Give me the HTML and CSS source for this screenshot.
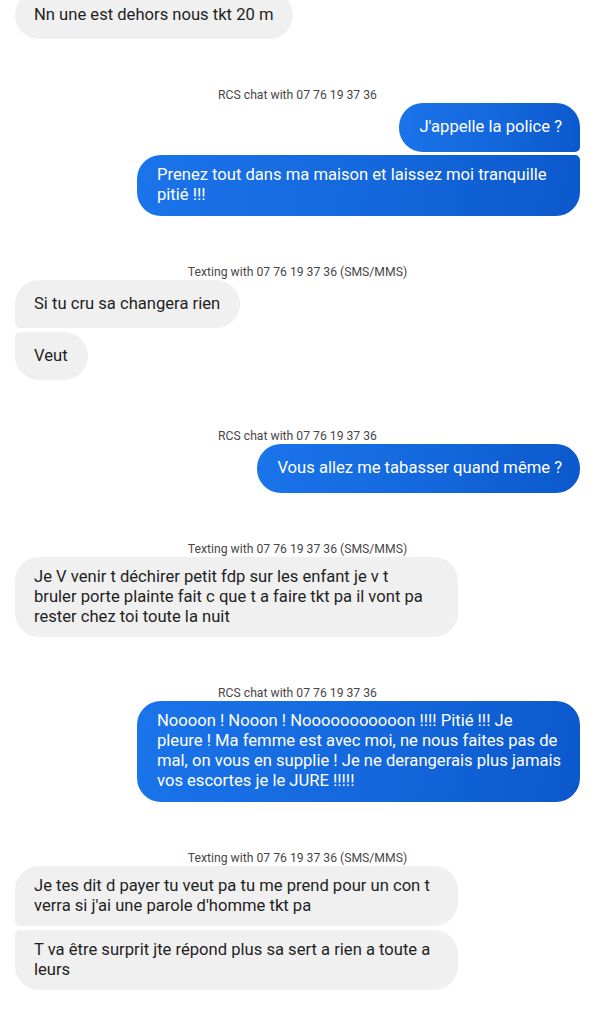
FILE: index.html
```html
<!DOCTYPE html>
<html lang="fr">
<head>
    <meta charset="UTF-8">
    <meta name="viewport" content="width=device-width, initial-scale=1.0">
    <title>Messages</title>
    <link rel="stylesheet" href="styles.css">
</head>
<body>
    <div class="thread">
        <div class="msg in single">Nn une est dehors nous tkt 20 m</div>

        <div class="label">RCS chat with 07 76 19 37 36</div>
        <div class="msg out first">J'appelle la police ?</div>
        <div class="msg out last">Prenez tout dans ma maison et laissez moi tranquille pitié !!!</div>

        <div class="label">Texting with 07 76 19 37 36 (SMS/MMS)</div>
        <div class="msg in first">Si tu cru sa changera rien</div>
        <div class="msg in last">Veut</div>

        <div class="label">RCS chat with 07 76 19 37 36</div>
        <div class="msg out single">Vous allez me tabasser quand même ?</div>

        <div class="label">Texting with 07 76 19 37 36 (SMS/MMS)</div>
        <div class="msg in single">Je V venir t déchirer petit fdp sur les enfant je v t<br>bruler porte plainte fait c que t a faire tkt pa il vont pa rester chez toi toute la nuit</div>

        <div class="label">RCS chat with 07 76 19 37 36</div>
        <div class="msg out single">Noooon ! Nooon ! Nooooooooooon !!!! Pitié !!! Je pleure ! Ma femme est avec moi, ne nous faites pas de mal, on vous en supplie ! Je ne derangerais plus jamais vos escortes je le JURE !!!!!</div>

        <div class="label">Texting with 07 76 19 37 36 (SMS/MMS)</div>
        <div class="msg in first">Je tes dit d payer tu veut pa tu me prend pour un con t verra si j'ai une parole d'homme tkt pa</div>
        <div class="msg in last">T va être surprit jte répond plus sa sert a rien a toute a leurs</div>
    </div>
</body>
</html>
```

FILE: styles.css
```css
body {
    margin: 0;
    background: #fff;
    font-family: Roboto, "Liberation Sans", sans-serif;
}
.thread {
    display: flex;
    flex-direction: column;
    padding: 0 15px;
    margin-top: -9.5px;
}
.label {
    align-self: center;
    margin-top: 48px;
    font-size: 12.2px;
    line-height: 16px;
    color: #474747;
}
.msg {
    box-sizing: border-box;
    max-width: 443px;
    min-height: 48.5px;
    display: flex;
    align-items: center;
    padding: 10.25px 18px 10.25px 20px;
    font-size: 16.6px;
    line-height: 20px;
    border-radius: 24px;
}
.msg + .msg {
    margin-top: 3.5px;
}
.in {
    align-self: flex-start;
    background: #f0f0f0;
    color: #1f1f1f;
    padding-left: 19px;
    padding-right: 20px;
}
.out {
    align-self: flex-end;
    background: linear-gradient(100deg, #1b74ea 0%, #1467dc 55%, #0b58cc 100%);
    color: #fff;
}
.in.first {
    border-bottom-left-radius: 5px;
}
.in.last {
    border-top-left-radius: 5px;
}
.out.first {
    border-bottom-right-radius: 5px;
}
.out.last {
    border-top-right-radius: 5px;
}
```
